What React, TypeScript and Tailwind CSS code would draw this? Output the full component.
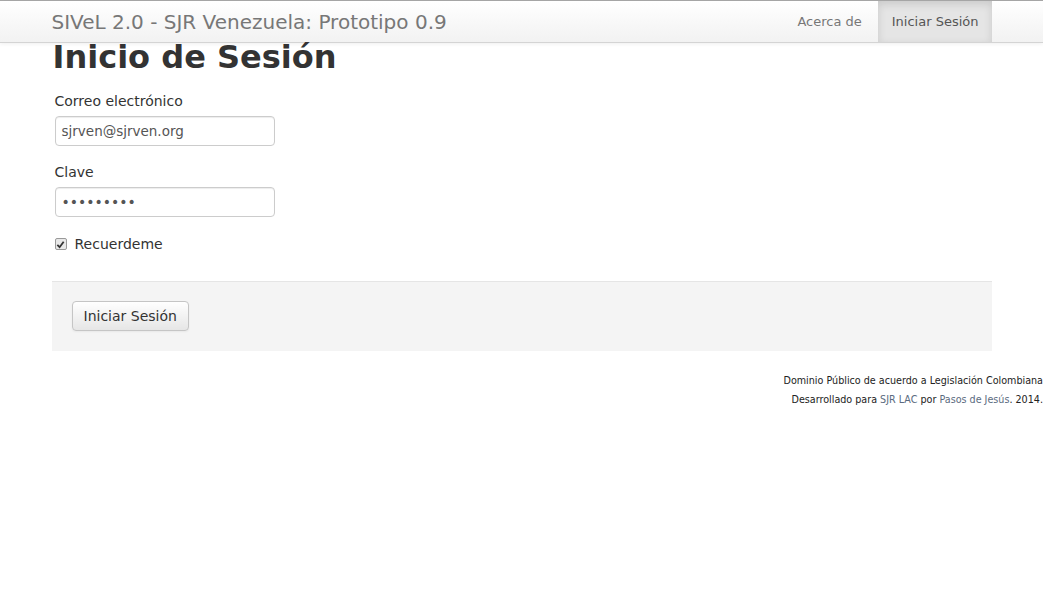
import React from "react";

export default function App() {
  return (
    <div className="min-h-[589px] bg-white text-[14px] text-[#333]" style={{ fontFamily: '"DejaVu Sans", sans-serif' }}>
      <div className="h-px bg-[#a8a8a8]" />
      <div className="h-[42px] border-b border-[#d4d4d4] bg-gradient-to-b from-white to-[#f2f2f2] shadow-[0_1px_4px_rgba(0,0,0,0.065)]">
        <div className="mx-auto flex h-full w-[940px] items-stretch justify-between">
          <div className="flex items-center text-[20px] text-[#777]">SIVeL 2.0 - SJR Venezuela: Prototipo 0.9</div>
          <div className="flex items-stretch text-[13px]">
            <div className="flex items-center pl-[15px] pr-[16px] text-[#777]">Acerca de</div>
            <div className="flex items-center bg-[#e5e5e5] pl-[14px] pr-[13px] text-[#555] shadow-[inset_0_3px_8px_rgba(0,0,0,0.125)]">Iniciar Sesión</div>
          </div>
        </div>
      </div>
      <div className="mx-auto w-[940px]">
        <h1 className="-mt-[4px] ml-px text-[32px] font-bold leading-[36px] text-[#333]">Inicio de Sesión</h1>
        <div className="mt-[16px] pl-[3px]">
          <label className="block leading-[20px] text-[#333]">Correo electrónico</label>
          <div className="mt-[5px] flex h-[30px] w-[220px] items-center rounded-[4px] border border-[#ccc] px-[6px] text-[13.5px] text-[#555] shadow-[inset_0_1px_1px_rgba(0,0,0,0.075)]">sjrven@sjrven.org</div>
          <label className="mt-[16px] block leading-[20px] text-[#333]">Clave</label>
          <div className="mt-[5px] flex h-[30px] w-[220px] items-center rounded-[4px] border border-[#ccc] px-[6px] text-[14px] text-[#555] shadow-[inset_0_1px_1px_rgba(0,0,0,0.075)]">•••••••••</div>
          <div className="mt-[17px] flex h-[20px] items-center gap-[8px]">
            <span className="flex h-[12px] w-[12px] items-center justify-center rounded-[2px] border border-[#999] bg-[#e8e8e8]">
              <svg width="9" height="9" viewBox="0 0 10 10"><path d="M1.5 5.5 L4 8 L8.5 2" stroke="#333" strokeWidth="2" fill="none" /></svg>
            </span>
            <span>Recuerdeme</span>
          </div>
        </div>
        <div className="mt-[27px] h-[70px] border-t border-[#e5e5e5] bg-[#f4f4f4] px-[20px] pt-[19px]">
          <div className="inline-flex h-[30px] items-center rounded-[4px] border border-[#c5c5c5] bg-gradient-to-b from-white to-[#e6e6e6] px-[11px] text-[14px] text-[#333] shadow-[0_1px_2px_rgba(0,0,0,0.05)]">Iniciar Sesión</div>
        </div>
      </div>
      <div className="mt-[20px] text-right text-[9.6px] leading-[19px] text-[#222]">
        <div>Dominio Público de acuerdo a Legislación Colombiana</div>
        <div>Desarrollado para <span className="text-[#5b6b80]">SJR LAC</span> por <span className="text-[#5b6b80]">Pasos de Jesús</span>. 2014.</div>
      </div>
    </div>
  );
}
